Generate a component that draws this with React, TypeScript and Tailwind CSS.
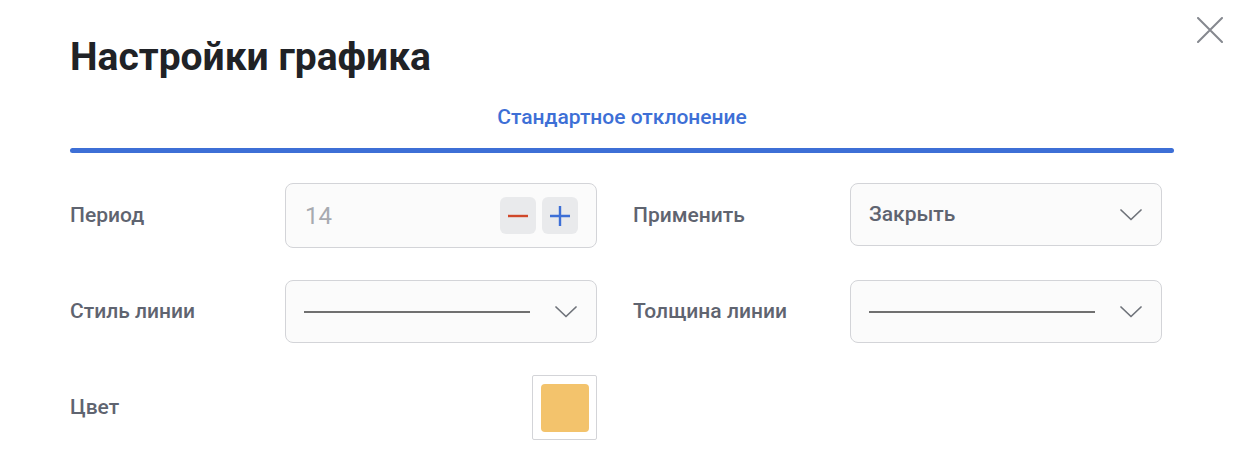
const font = { fontFamily: "Roboto, 'Noto Sans', sans-serif" };

function Label({ children }: { children: React.ReactNode }) {
  return (
    <div className="flex items-center text-[21px] font-medium text-[#5f6470]">
      {children}
    </div>
  );
}

function Chevron() {
  return (
    <svg width="22" height="12" viewBox="0 0 22 12" fill="none" className="text-[#6f737a]">
      <path d="M1 1 L11 10.5 L21 1" stroke="currentColor" strokeWidth="1.7" strokeLinecap="round" strokeLinejoin="round" />
    </svg>
  );
}

function Select({ children }: { children: React.ReactNode }) {
  return (
    <div className="flex h-[63px] items-center justify-between rounded-[8px] border border-[#d3d4d8] bg-[#fbfbfb] pl-[18px] pr-[19px]">
      <div className="flex flex-1 items-center">{children}</div>
      <Chevron />
    </div>
  );
}

function LineSample() {
  return <div className="h-[2px] w-[226px] bg-[#707070]" />;
}

export default function App() {
  return (
    <div className="relative h-[474px] w-[1244px] bg-white" style={font}>
      <button className="absolute left-[1197px] top-[17px] text-[#85888f]">
        <svg width="26" height="26" viewBox="0 0 26 26" fill="none">
          <path d="M1 1 L25 25 M25 1 L1 25" stroke="currentColor" strokeWidth="2" strokeLinecap="round" />
        </svg>
      </button>

      <div className="px-[70px] pt-[32px]">
        <h1 className="text-[39px] font-bold leading-[50px] text-[#202226]">
          Настройки графика
        </h1>

        {/* Tab */}
        <div className="mt-[20px]">
          <div className="text-center text-[21px] font-medium leading-[30px] text-[#3d6fd6]">
            Стандартное отклонение
          </div>
          <div className="mt-[16px] h-[5px] rounded-full bg-[#3d6fd6]" />
        </div>

        {/* Form */}
        <div className="mt-[30px] grid w-[1092px] grid-cols-[215px_312px_253px_312px] gap-y-[32px]">
          <Label>Период</Label>
          <div className="flex h-[65px] items-center justify-between rounded-[8px] border border-[#d3d4d8] bg-[#fbfbfb] pl-[19px] pr-[18px]">
            <span className="text-[24px] text-[#a7aab0]">14</span>
            <div className="flex gap-[6px]">
              <button className="flex h-[37px] w-[36px] items-center justify-center rounded-[6px] bg-[#e9eaec] text-[#d0482a]">
                <svg width="20" height="20" viewBox="0 0 20 20">
                  <path d="M0 10 H20" stroke="currentColor" strokeWidth="2.4" />
                </svg>
              </button>
              <button className="flex h-[37px] w-[36px] items-center justify-center rounded-[6px] bg-[#e9eaec] text-[#3d6fd6]">
                <svg width="20" height="20" viewBox="0 0 20 20">
                  <path d="M0 10 H20 M10 0 V20" stroke="currentColor" strokeWidth="2.4" />
                </svg>
              </button>
            </div>
          </div>
          <div className="flex pl-[36px]">
            <Label>Применить</Label>
          </div>
          <Select>
            <span className="text-[21px] font-medium text-[#5f6470]">Закрыть</span>
          </Select>

          <Label>Стиль линии</Label>
          <Select>
            <LineSample />
          </Select>
          <div className="flex pl-[36px]">
            <Label>Толщина линии</Label>
          </div>
          <Select>
            <LineSample />
          </Select>

          <Label>Цвет</Label>
          <div className="flex justify-end">
            <div className="flex h-[65px] w-[65px] items-center justify-center rounded-[2px] border border-[#d3d4d8] bg-white">
              <div className="h-[48px] w-[48px] rounded-[4px] bg-[#f3c36c]" />
            </div>
          </div>
        </div>
      </div>
    </div>
  );
}
